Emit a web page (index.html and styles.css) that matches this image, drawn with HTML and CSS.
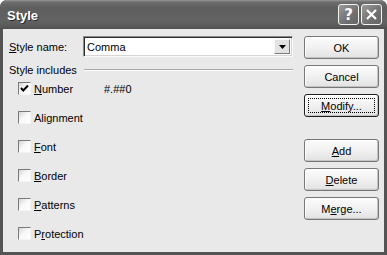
FILE: index.html
```html
<!DOCTYPE html>
<html>
<head>
<meta charset="utf-8">
<link rel="stylesheet" href="styles.css">
</head>
<body>
<div class="window">
  <div class="titlebar">
    <span class="title">Style</span>
    <div class="caption-buttons">
      <span class="cap-btn help">?</span>
      <span class="cap-btn close"><svg width="19" height="19" viewBox="0 0 19 19"><path d="M5 5 L14 14 M14 5 L5 14" stroke="#fff" stroke-width="2.2" fill="none"/></svg></span>
    </div>
  </div>
  <div class="client">
    <div class="left">
      <div class="name-row">
        <span class="name-label"><u>S</u>tyle name:</span>
        <div class="combo">
          <span class="combo-text">Comma</span>
          <span class="combo-btn"><svg width="7" height="4" viewBox="0 0 7 4"><path d="M0 0 H7 L3.5 4 Z" fill="#000"/></svg></span>
        </div>
      </div>
      <div class="group-head"><span>Style includes</span><span class="rule"></span></div>
      <div class="checks">
        <div class="check-row"><span class="cb"><svg width="11" height="11" viewBox="0 0 11 11"><path d="M2 5 L4.3 7.5 L9 2.5" stroke="#000" stroke-width="2" fill="none"/></svg></span><span class="cb-label"><u>N</u>umber</span><span class="fmt">#.##0</span></div>
        <div class="check-row"><span class="cb"></span><span class="cb-label">Alignment</span></div>
        <div class="check-row"><span class="cb"></span><span class="cb-label"><u>F</u>ont</span></div>
        <div class="check-row"><span class="cb"></span><span class="cb-label"><u>B</u>order</span></div>
        <div class="check-row"><span class="cb"></span><span class="cb-label"><u>P</u>atterns</span></div>
        <div class="check-row"><span class="cb"></span><span class="cb-label">P<u>r</u>otection</span></div>
      </div>
    </div>
    <div class="buttons">
      <div class="btn">OK</div>
      <div class="btn">Cancel</div>
      <div class="btn focused"><span class="focus-rect"><u>M</u>odify...</span></div>
      <div class="btn spaced"><u>A</u>dd</div>
      <div class="btn"><u>D</u>elete</div>
      <div class="btn">M<u>e</u>rge...</div>
    </div>
  </div>
</div>
</body>
</html>
```
FILE: styles.css
```css
html, body {
  margin: 0;
  background: #ffffff;
}
body {
  font-family: "Liberation Sans", Arial, sans-serif;
  font-size: 11px;
  color: #000;
}
.window {
  width: 387px;
  height: 255px;
  display: flex;
  flex-direction: column;
  background: #545454;
  border-radius: 7px 7px 0 0;
  overflow: hidden;
}
.titlebar {
  height: 29px;
  flex: none;
  display: flex;
  align-items: center;
  padding: 0 5px 0 7px;
  box-sizing: border-box;
  background: linear-gradient(#a0a0a0 0, #7c7c7c 1px, #6a6a6a 3px, #5e5e5e 8px, #636363 20px, #5a5a5a 26px, #4e4e4e 29px);
}
.title {
  flex: 1;
  font-weight: bold;
  font-size: 13px;
  color: #fff;
  text-shadow: 1px 1px 0 #2e2e2e;
  padding-top: 1px;
}
.caption-buttons {
  display: flex;
  gap: 2px;
}
.cap-btn {
  width: 21px;
  height: 21px;
  box-sizing: border-box;
  border: 1px solid #f4f4f4;
  border-radius: 3px;
  background: linear-gradient(135deg, #9a9a9a, #707070 60%, #666);
  color: #fff;
  display: flex;
  align-items: center;
  justify-content: center;
  font-weight: bold;
  font-size: 15px;
  font-family: "DejaVu Sans", sans-serif;
}
.client {
  flex: 1;
  margin: 0 3px 3px;
  background: #e9e9e9;
  display: flex;
  padding: 7px 5px 0 6px;
  gap: 11px;
}
.left {
  width: 284px;
  display: flex;
  flex-direction: column;
}
.name-row {
  display: flex;
  align-items: center;
  height: 21px;
}
.name-label {
  width: 74px;
  flex: none;
}
.combo {
  flex: 1;
  height: 21px;
  box-sizing: border-box;
  display: flex;
  align-items: center;
  background: #fff;
  border: 1px solid;
  border-color: #8a8a8a #fafafa #fafafa #8a8a8a;
  box-shadow: inset 1px 1px 0 #2e2e2e, inset -1px -1px 0 #d6d6d6;
  padding: 2px 2px 2px 3px;
}
.combo-text {
  flex: 1;
}
.combo-btn {
  width: 16px;
  height: 15px;
  box-sizing: border-box;
  display: flex;
  align-items: center;
  justify-content: center;
  background: #e2e2e2;
  border: 1px solid;
  border-color: #f8f8f8 #7a7a7a #7a7a7a #f8f8f8;
}
.group-head {
  margin-top: 6px;
  height: 14px;
  display: flex;
  align-items: center;
}
.rule {
  flex: 1;
  margin-left: 7px;
  border-top: 1px solid #a8a8a8;
  border-bottom: 1px solid #fdfdfd;
}
.checks {
  margin-top: -3px;
  display: flex;
  flex-direction: column;
}
.check-row {
  height: 29px;
  display: flex;
  align-items: center;
}
.cb {
  width: 13px;
  height: 13px;
  box-sizing: border-box;
  margin-left: 9px;
  border: 1px solid;
  border-color: #7a7a7a #f4f4f4 #f4f4f4 #7a7a7a;
  background: linear-gradient(135deg, #d4d4d4, #f8f8f8 45%, #ffffff);
  display: flex;
  align-items: center;
  justify-content: center;
}
.cb-label {
  margin-left: 3px;
  width: 70px;
}
.buttons {
  width: 75px;
  display: flex;
  flex-direction: column;
  gap: 6px;
}
.btn {
  height: 23px;
  box-sizing: border-box;
  border: 1px solid #777;
  border-radius: 3px;
  background: linear-gradient(#fcfcfc, #f1f1f1 50%, #e2e2e2);
  box-shadow: inset -1px -1px 0 #c4c4c4, inset 1px 1px 0 #fff;
  display: flex;
  align-items: center;
  justify-content: center;
}
.btn.spaced {
  margin-top: 16px;
}
.btn.focused {
  border-color: #1e1e1e;
  padding: 3px;
}
.focus-rect {
  flex: 1;
  align-self: stretch;
  border: 1px dotted #000;
  display: flex;
  align-items: center;
  justify-content: center;
}
```
